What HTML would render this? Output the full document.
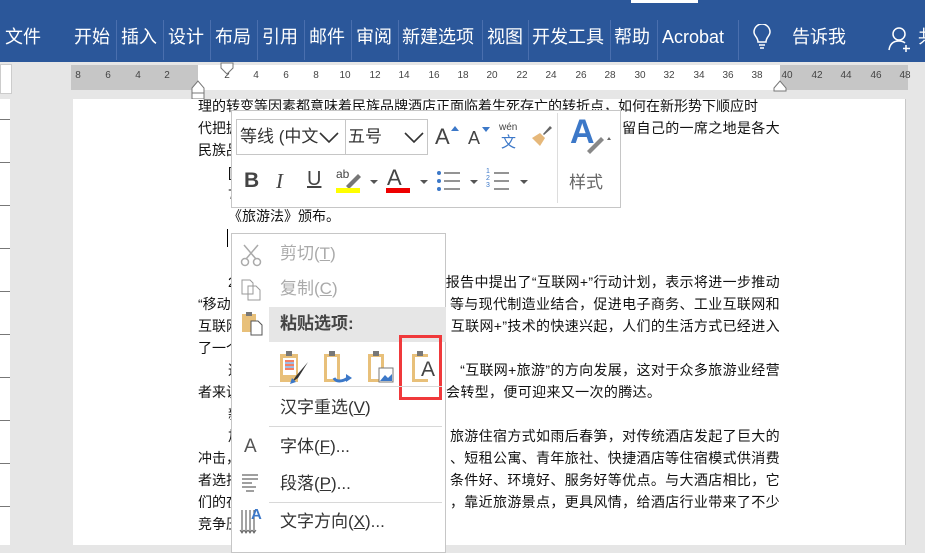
<!DOCTYPE html>
<html><head><meta charset="utf-8">
<style>
*{margin:0;padding:0;box-sizing:border-box}
body{width:925px;height:545px;overflow:hidden;position:relative;background:#e6e6e6;font-family:"Liberation Sans","Noto Sans CJK SC",sans-serif}
.a{position:absolute;white-space:nowrap}
.tab{position:absolute;top:25px;color:#fff;font-size:18px;line-height:24px}
.sep{position:absolute;top:20px;width:1px;height:40px;background:#4a6fae}
.rn{position:absolute;top:70px;font-size:10px;color:#444;width:20px;text-align:center;margin-left:-10px}
.t{position:absolute;font-size:14px;color:#111;line-height:20px;white-space:nowrap}
.r{right:145px;letter-spacing:0.35px}
.mi{position:absolute;left:280px;font-size:17px;color:#333;line-height:22px}
.hr{position:absolute;left:269px;width:173px;height:1px;background:#d8d8d8}
</style></head><body>
<div class="a" style="left:0;top:0;width:925px;height:62px;background:#2b579a"></div>
<div class="a" style="left:631px;top:0;width:67px;height:3px;background:#fff"></div>
<div class="tab" style="left:5px">文件</div>
<div class="tab" style="left:74px">开始</div><div class="sep" style="left:116px"></div>
<div class="tab" style="left:121px">插入</div><div class="sep" style="left:163px"></div>
<div class="tab" style="left:168px">设计</div><div class="sep" style="left:210px"></div>
<div class="tab" style="left:215px">布局</div><div class="sep" style="left:257px"></div>
<div class="tab" style="left:262px">引用</div><div class="sep" style="left:304px"></div>
<div class="tab" style="left:309px">邮件</div><div class="sep" style="left:351px"></div>
<div class="tab" style="left:356px">审阅</div><div class="sep" style="left:398px"></div>
<div class="tab" style="left:402px">新建选项</div><div class="sep" style="left:482px"></div>
<div class="tab" style="left:487px">视图</div><div class="sep" style="left:528px"></div>
<div class="tab" style="left:532px">开发工具</div><div class="sep" style="left:610px"></div>
<div class="tab" style="left:614px">帮助</div><div class="sep" style="left:657px"></div>
<div class="tab" style="left:662px">Acrobat</div><div class="sep" style="left:738px"></div>
<svg class="a" style="left:752px;top:24px" width="20" height="28" viewBox="0 0 20 28"><path d="M6 18 C6 13 2 12 2 8 A8 8 0 0 1 18 8 C18 12 14 13 14 18 Z M7 21h6 M8 24h4" fill="none" stroke="#fff" stroke-width="1.5"/></svg>
<div class="tab" style="left:792px">告诉我</div>
<svg class="a" style="left:888px;top:26px" width="26" height="26" viewBox="0 0 26 26"><circle cx="11" cy="8" r="6" fill="none" stroke="#fff" stroke-width="1.5"/><path d="M1 24 C2 17 6 15 11 15 C14 15 16 16 17 17 M18 19v7 M15 22.5h7" fill="none" stroke="#fff" stroke-width="1.5"/></svg>
<div class="tab" style="left:918px">共</div>

<!-- rulers -->
<div class="a" style="left:0;top:64px;width:12px;height:30px;background:#fff;border:1px solid #ccc"></div>
<div class="a" style="left:0;top:99px;width:10px;height:446px;background:repeating-linear-gradient(#fff 0 20px,#777 20px 21px,#fff 21px 43px)"></div>
<div class="a" style="left:71px;top:65px;width:837px;height:25px;background:#c6c6c6"></div>
<div class="a" style="left:198px;top:65px;width:582px;height:25px;background:#fff"></div>
<div class="rn" style="left:78px">8</div><div class="rn" style="left:108px">6</div><div class="rn" style="left:138px">4</div><div class="rn" style="left:167px">2</div>
<div class="rn" style="left:227px">2</div><div class="rn" style="left:256px">4</div><div class="rn" style="left:286px">6</div><div class="rn" style="left:316px">8</div><div class="rn" style="left:345px">10</div><div class="rn" style="left:375px">12</div><div class="rn" style="left:404px">14</div><div class="rn" style="left:434px">16</div><div class="rn" style="left:463px">18</div><div class="rn" style="left:492px">20</div><div class="rn" style="left:522px">22</div><div class="rn" style="left:551px">24</div><div class="rn" style="left:581px">26</div><div class="rn" style="left:610px">28</div><div class="rn" style="left:640px">30</div><div class="rn" style="left:669px">32</div><div class="rn" style="left:699px">34</div><div class="rn" style="left:728px">36</div><div class="rn" style="left:757px">38</div><div class="rn" style="left:787px">40</div><div class="rn" style="left:817px">42</div><div class="rn" style="left:846px">44</div><div class="rn" style="left:876px">46</div><div class="rn" style="left:905px">48</div>
<svg class="a" style="left:220px;top:62px" width="14" height="14"><path d="M1 1h12v5l-6 6l-6-6z" fill="#fff" stroke="#777"/></svg>
<svg class="a" style="left:191px;top:80px" width="14" height="20"><path d="M1 8l6-7l6 7v5h-12z M1 13h12v6h-12z" fill="#fff" stroke="#777"/></svg>
<svg class="a" style="left:773px;top:80px" width="14" height="12"><path d="M1 8l6-7l6 7v3h-12z" fill="#fff" stroke="#777"/></svg>

<!-- page -->
<div class="a" style="left:73px;top:99px;width:833px;height:446px;background:#fff;border-right:1px solid #c8c8c8"></div>
<div class="t" style="left:198px;top:96px">理的转变等因素都意味着民族品牌酒店正面临着生死存亡的转折点，如何在新形势下顺应时</div>
<div class="t" style="left:198px;top:118px">代把握</div><div class="t r" style="top:118px">留自己的一席之地是各大</div>
<div class="t" style="left:198px;top:140px">民族品</div>
<div class="t" style="left:228px;top:162px">[</div>
<div class="t" style="left:228px;top:184px">7</div>
<div class="t" style="left:228px;top:206px">《旅游法》颁布。</div>
<div class="a" style="left:227px;top:229px;width:1px;height:18px;background:#000"></div>
<div class="t" style="left:228px;top:272px">2</div><div class="t r" style="top:272px">报告中提出了“互联网+”行动计划，表示将进一步推动</div>
<div class="t" style="left:198px;top:294px">“移动</div><div class="t r" style="top:294px">等与现代制造业结合，促进电子商务、工业互联网和</div>
<div class="t" style="left:198px;top:316px">互联网</div><div class="t r" style="top:316px">互联网+”技术的快速兴起，人们的生活方式已经进入</div>
<div class="t" style="left:198px;top:338px">了一个</div>
<div class="t" style="left:228px;top:360px">这</div><div class="t r" style="top:360px">“互联网+旅游”的方向发展，这对于众多旅游业经营</div>
<div class="t" style="left:198px;top:382px">者来说</div><div class="t" style="left:446px;top:382px;letter-spacing:0.35px">会转型，便可迎来又一次的腾达。</div>
<div class="t" style="left:228px;top:404px">新</div>
<div class="t" style="left:228px;top:426px">加</div><div class="t r" style="top:426px">旅游住宿方式如雨后春笋，对传统酒店发起了巨大的</div>
<div class="t" style="left:198px;top:448px">冲击，</div><div class="t r" style="top:448px">、短租公寓、青年旅社、快捷酒店等住宿模式供消费</div>
<div class="t" style="left:198px;top:470px">者选择</div><div class="t r" style="top:470px">条件好、环境好、服务好等优点。与大酒店相比，它</div>
<div class="t" style="left:198px;top:492px">们的在</div><div class="t r" style="top:492px">，靠近旅游景点，更具风情，给酒店行业带来了不少</div>
<div class="t" style="left:198px;top:514px">竞争压</div>

<!-- mini toolbar -->
<div class="a" style="left:231px;top:110px;width:390px;height:98px;background:#fff;border:1px solid #c6c6c6"></div>
<div class="a" style="left:236px;top:119px;width:110px;height:36px;border:1px solid #c6c6c6;font-size:17px;color:#333;line-height:34px;padding-left:3px;overflow:hidden"><span style="display:inline-block;width:78px;overflow:hidden">等线 (中文</span></div>
<div class="a" style="left:345px;top:119px;width:83px;height:36px;border:1px solid #c6c6c6;font-size:17px;color:#333;line-height:34px;padding-left:2px">五号</div>
<svg class="a" style="left:318px;top:130px" width="22" height="14"><path d="M2 3l9 9l9-9" fill="none" stroke="#333" stroke-width="1.6"/></svg>
<svg class="a" style="left:403px;top:130px" width="22" height="14"><path d="M2 3l9 9l9-9" fill="none" stroke="#333" stroke-width="1.6"/></svg>
<div class="a" style="left:435px;top:124px;font-size:22px;color:#444">A</div><svg class="a" style="left:451px;top:125px" width="8" height="6"><path d="M0 6l4-5l4 5z" fill="#3c78c8"/></svg>
<div class="a" style="left:468px;top:128px;font-size:18px;color:#444">A</div><svg class="a" style="left:482px;top:127px" width="8" height="6"><path d="M0 0l4 5l4-5z" fill="#3c78c8"/></svg>
<div class="a" style="left:499px;top:122px;font-size:10px;color:#444">wén</div><div class="a" style="left:501px;top:131px;font-size:15px;color:#3c78c8">文</div>
<svg class="a" style="left:529px;top:124px" width="24" height="24"><path d="M14 10l7-8l2 2l-8 7z" fill="#666"/><path d="M3 14l8-5l5 5l-5 8z" fill="#e6b87a"/></svg>
<div class="a" style="left:557px;top:113px;width:1px;height:90px;background:#ddd"></div>
<div class="a" style="left:570px;top:113px;font-size:34px;font-weight:bold;color:#3c78c8">A</div>
<svg class="a" style="left:583px;top:125px" width="30" height="30"><path d="M4 26l14-14l3 3l-14 14z" fill="#888"/><path d="M26 12l2 3l-4 0z" fill="#666"/></svg>
<div class="a" style="left:569px;top:168px;font-size:17px;color:#666">样式</div>
<div class="a" style="left:244px;top:169px;font-size:21px;font-weight:bold;color:#444">B</div>
<div class="a" style="left:276px;top:169px;font-size:21px;font-style:italic;color:#444;font-family:'Liberation Serif',serif">I</div>
<div class="a" style="left:307px;top:168px;font-size:20px;color:#444;text-decoration:underline">U</div>
<div class="a" style="left:336px;top:167px;font-size:12px;color:#444">ab</div>
<svg class="a" style="left:344px;top:170px" width="18" height="18"><path d="M2 16l12-12l3 3l-12 12z" fill="#777"/></svg>
<div class="a" style="left:336px;top:188px;width:24px;height:5px;background:#ffff00"></div>
<svg class="a" style="left:370px;top:180px" width="8" height="5"><path d="M0 0h8l-4 4z" fill="#555"/></svg>
<div class="a" style="left:387px;top:165px;font-size:22px;color:#444">A</div>
<div class="a" style="left:386px;top:188px;width:24px;height:5px;background:#e00"></div>
<svg class="a" style="left:420px;top:180px" width="8" height="5"><path d="M0 0h8l-4 4z" fill="#555"/></svg>
<svg class="a" style="left:436px;top:170px" width="26" height="22"><circle cx="3" cy="3" r="2" fill="#3c78c8"/><circle cx="3" cy="11" r="2" fill="#3c78c8"/><circle cx="3" cy="19" r="2" fill="#3c78c8"/><path d="M8 3h16M8 11h16M8 19h16" stroke="#555" stroke-width="1.3"/></svg>
<svg class="a" style="left:470px;top:180px" width="8" height="5"><path d="M0 0h8l-4 4z" fill="#555"/></svg>
<div class="a" style="left:486px;top:168px;font-size:7px;line-height:7px;color:#3c78c8">1<br>2<br>3</div>
<svg class="a" style="left:492px;top:170px" width="18" height="22"><path d="M2 3h15M2 11h15M2 19h15" stroke="#555" stroke-width="1.3"/></svg>
<svg class="a" style="left:520px;top:180px" width="8" height="5"><path d="M0 0h8l-4 4z" fill="#555"/></svg>

<!-- context menu -->
<div class="a" style="left:231px;top:233px;width:215px;height:320px;background:#fff;border:1px solid #c6c6c6"></div>
<svg class="a" style="left:240px;top:243px" width="22" height="24"><path d="M4 2l12 14M18 2l-12 14" stroke="#aaa" stroke-width="1.5"/><circle cx="5" cy="19" r="3.5" fill="none" stroke="#aaa" stroke-width="1.5"/><circle cx="17" cy="19" r="3.5" fill="none" stroke="#aaa" stroke-width="1.5"/></svg>
<div class="mi" style="top:243px;color:#aaa">剪切(<u>T</u>)</div>
<svg class="a" style="left:240px;top:278px" width="22" height="24"><path d="M2 2h8l3 3v11h-11z M8 8h8l4 4v10h-12z" fill="#fff" stroke="#999"/></svg>
<div class="mi" style="top:278px;color:#aaa">复制(<u>C</u>)</div>
<div class="a" style="left:269px;top:307px;width:177px;height:35px;background:#e6e6e6"></div>
<svg class="a" style="left:240px;top:310px" width="24" height="26"><rect x="2" y="4" width="14" height="18" fill="#e8c07a"/><rect x="6" y="2" width="6" height="4" fill="#777"/><path d="M11 11h7l4 4v10h-11z" fill="#fff" stroke="#555"/></svg>
<div class="mi" style="top:313px;font-weight:bold;color:#444">粘贴选项:</div>
<svg class="a" style="left:278px;top:348px" width="34" height="38"><path d="M2 6h18v28h-18z" fill="#e8c07a"/><rect x="8" y="3" width="6" height="5" fill="#777"/><rect x="5" y="10" width="13" height="17" fill="#fff"/><path d="M7 13h9M7 17h9M7 21h9" stroke="#e53" stroke-width="1.5"/><path d="M7 15h9M7 19h9" stroke="#3c78c8"/><path d="M30 14l-12 14l-4 6l6-4z" fill="#333"/><path d="M14 30l4 4l-6 2z" fill="#3c78c8"/></svg>
<svg class="a" style="left:322px;top:348px" width="34" height="38"><path d="M2 6h16v28h-16z" fill="#e8c07a"/><rect x="5" y="9" width="10" height="22" fill="#fff"/><rect x="7" y="3" width="6" height="5" fill="#777"/><path d="M12 30c2 4 8 4 14 0" fill="none" stroke="#3c78c8" stroke-width="3"/><path d="M24 26l6 4l-6 4z" fill="#3c78c8"/></svg>
<svg class="a" style="left:366px;top:348px" width="34" height="38"><path d="M2 6h16v28h-16z" fill="#e8c07a"/><rect x="5" y="9" width="10" height="22" fill="#fff"/><rect x="7" y="3" width="6" height="5" fill="#777"/><rect x="13" y="20" width="14" height="14" fill="#fff" stroke="#777"/><path d="M14 33l5-6l3 3l4-4v7z" fill="#3c78c8"/></svg>
<svg class="a" style="left:410px;top:348px" width="34" height="38"><path d="M2 6h16v28h-16z" fill="#e8c07a"/><rect x="5" y="9" width="13" height="22" fill="#fff"/><rect x="7" y="3" width="6" height="5" fill="#777"/></svg>
<div class="a" style="left:421px;top:358px;font-size:21px;color:#444">A</div>
<div class="a" style="left:399px;top:335px;width:43px;height:65px;border:3px solid #f0393b"></div>
<div class="hr" style="top:386px"></div>
<div class="mi" style="top:397px">汉字重选(<u>V</u>)</div>
<div class="hr" style="top:426px"></div>
<div class="a" style="left:244px;top:436px;font-size:19px;color:#555">A</div>
<div class="mi" style="top:436px">字体(<u>F</u>)...</div>
<svg class="a" style="left:240px;top:472px" width="22" height="22"><path d="M2 3h16M2 7h16M2 11h10M2 15h14M6 19h8" stroke="#666" stroke-width="1.2"/></svg>
<div class="mi" style="top:473px">段落(<u>P</u>)...</div>
<div class="hr" style="top:502px"></div>
<svg class="a" style="left:239px;top:508px" width="26" height="28"><path d="M3 2v22M7 2v22M11 2v22M15 2v22" stroke="#666" stroke-width="1.2"/><path d="M1 22l2 3l2-3M5 22l2 3l2-3M9 22l2 3l2-3M13 22l2 3l2-3" fill="none" stroke="#666"/></svg>
<div class="a" style="left:251px;top:506px;font-size:15px;color:#3c78c8;font-weight:bold">A</div>
<div class="mi" style="top:511px">文字方向(<u>X</u>)...</div>
</body></html>
